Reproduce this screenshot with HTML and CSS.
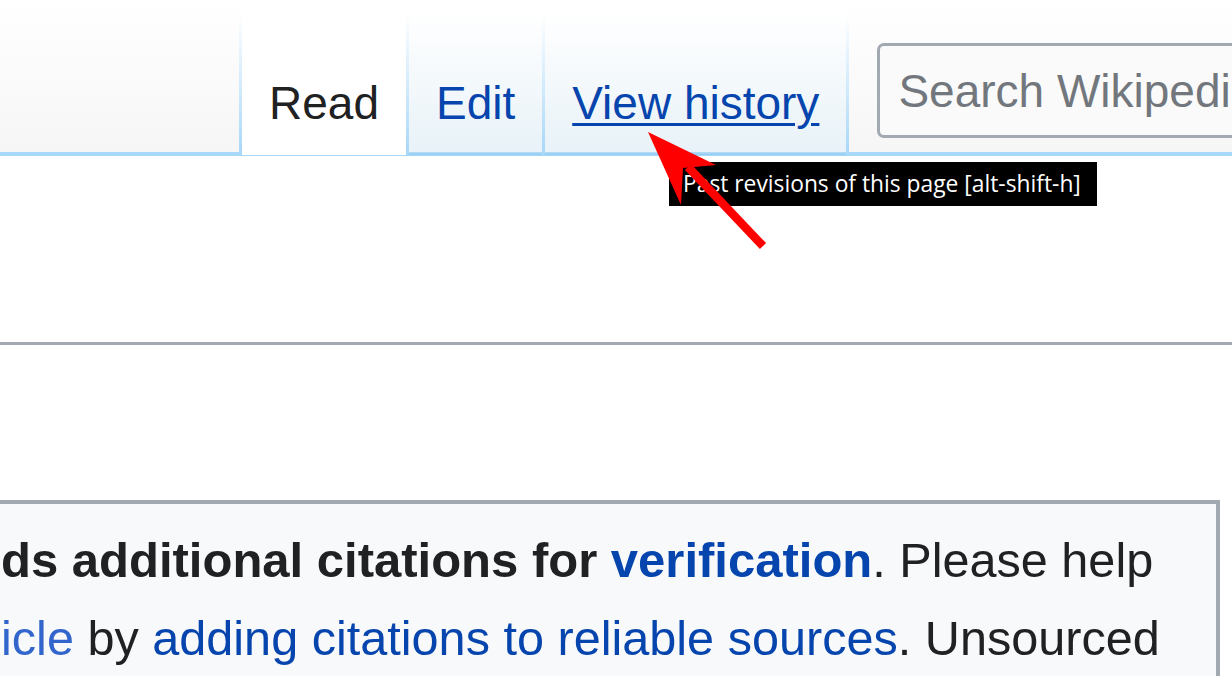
FILE: index.html
```html
<!DOCTYPE html>
<html lang="en">
<head>
<meta charset="utf-8">
<title>Wikipedia</title>
<link rel="stylesheet" href="styles.css">
</head>
<body>
<header class="header">
  <div class="head-left"></div>
  <nav class="tabs">
    <span class="sep"></span>
    <div class="tab tab-selected"><span class="tab-label">Read</span></div>
    <span class="sep"></span>
    <div class="tab"><a class="tab-link" href="#">Edit</a></div>
    <span class="sep"></span>
    <div class="tab"><a class="tab-link tab-hover" href="#">View history</a></div>
    <span class="sep"></span>
  </nav>
  <div class="head-right">
    <div class="search">
      <span class="search-placeholder">Search Wikipedia</span>
    </div>
  </div>
</header>

<main class="content">
  <div class="rule"></div>
  <div class="ambox">
    <p class="ambox-text"><b>ds additional citations for <a class="link" href="#">verification</a></b>. Please help<br><a class="link link-light" href="#">icle</a> by <a class="link" href="#">adding citations to reliable sources</a>. Unsourced</p>
  </div>
</main>

<div class="tooltip">Past revisions of this page [alt-shift-h]</div>

<svg class="arrow" width="1232" height="676" viewBox="0 0 1232 676" aria-hidden="true">
  <line x1="688" y1="167" x2="763" y2="246" stroke="#ff0000" stroke-width="8.5"/>
  <polygon points="648,132 716,165 683,168 681,205" fill="#ff0000"/>
</svg>
</body>
</html>
```
FILE: styles.css
```css
html, body {
  margin: 0;
  padding: 0;
  background: #ffffff;
  overflow: hidden;
}

body {
  width: 1232px;
  height: 676px;
  position: relative;
  font-family: "Liberation Sans", Arial, sans-serif;
  color: #202122;
}

/* ---------- header ---------- */
.header {
  display: flex;
  align-items: flex-end;
  height: 156px;
}

.head-left {
  width: 239px;
  height: 156px;
  flex: none;
  background: linear-gradient(to bottom, #ffffff 0, #f6f6f6 152px, #a7d7f9 152px, #a7d7f9 156px);
}

.tabs {
  display: flex;
  align-items: flex-end;
  height: 156px;
  flex: none;
}

.sep {
  width: 3px;
  height: 143px;
  flex: none;
  background: linear-gradient(to bottom, rgba(167, 215, 249, 0) 0, #a7d7f9 100%);
}

.tab {
  height: 143px;
  padding: 67px 27px 0;
  box-sizing: border-box;
  background: linear-gradient(to top, #a7d7f9 0, #a7d7f9 1px, #8ecbf4 1px, #b6dcf6 4px, #e8f2f8 4px, #ffffff 100%);
  font-size: 46px;
  line-height: 46px;
}

.tab-selected {
  background: linear-gradient(to top, #a7d7f9 0, #a7d7f9 1px, #ffffff 1px, #ffffff 100%);
}

.tab-label {
  color: #202122;
}

.tab-link {
  color: #0645ad;
  text-decoration: none;
}

.tab-hover {
  text-decoration: underline;
  text-decoration-thickness: 3px;
  text-underline-offset: 4px;
}

.head-right {
  flex: 1;
  height: 156px;
  padding: 43px 0 0 28px;
  box-sizing: border-box;
  background: linear-gradient(to bottom, #ffffff 0, #f6f6f6 152px, #a7d7f9 152px, #a7d7f9 156px);
  overflow: hidden;
}

.search {
  width: 420px;
  height: 95px;
  box-sizing: border-box;
  border: 3px solid #a2a9b1;
  border-radius: 7px;
  background: #fafafa;
  padding-left: 18px;
  display: flex;
  align-items: center;
  white-space: nowrap;
  overflow: hidden;
}

.search-placeholder {
  font-size: 46px;
  color: #72777d;
  line-height: 46px;
}

/* ---------- content ---------- */
.content {
  padding-top: 186px;
}

.rule {
  height: 3px;
  background: #a2a9b1;
}

.ambox {
  margin-top: 155px;
  width: 1220px;
  box-sizing: border-box;
  border-top: 4px solid #a2a9b1;
  border-right: 4px solid #a2a9b1;
  background: #f8f9fa;
  padding: 17px 0 40px 1px;
}

.ambox-text {
  margin: 0;
  font-size: 48.6px;
  line-height: 78px;
  white-space: nowrap;
  color: #202122;
}

.ambox-text b {
  font-weight: bold;
  font-size: 49px;
}

.link {
  color: #0645ad;
  text-decoration: none;
}

.link-light {
  color: #3366cc;
}

/* ---------- overlays ---------- */
.tooltip {
  position: absolute;
  left: 669px;
  top: 162px;
  width: 428px;
  height: 44px;
  box-sizing: border-box;
  background: #000000;
  color: #ffffff;
  font-family: "Open Sans", "Noto Sans", sans-serif;
  font-size: 22.8px;
  line-height: 44px;
  padding-left: 14px;
  white-space: nowrap;
}

.arrow {
  position: absolute;
  left: 0;
  top: 0;
  pointer-events: none;
}
```
